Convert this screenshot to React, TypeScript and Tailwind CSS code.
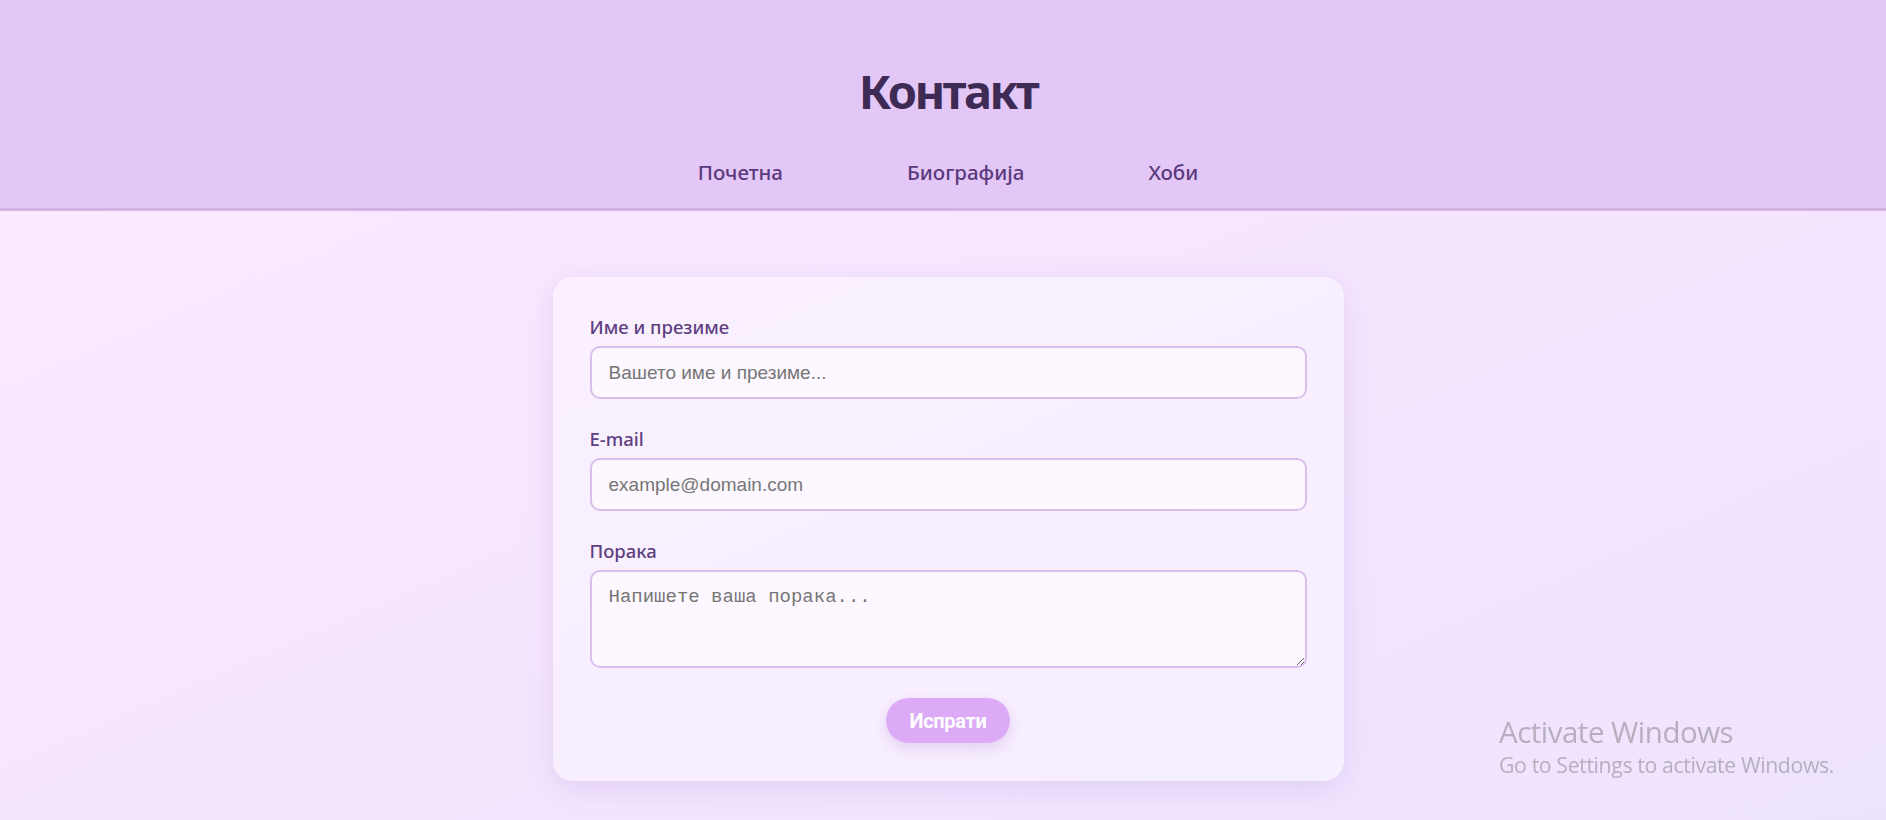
export default function App() {
  return (
    <div className="h-screen overflow-hidden pl-[10px] bg-gradient-to-br from-[#fce9ff] to-[#eee3fe] font-['Noto_Sans','Open_Sans',sans-serif]">
      {/* Header */}
      <header className="-ml-[10px] pl-[10px] h-[211px] bg-[#e3c7f7] border-b-[3px] border-[#d4b3e2] flex flex-col items-center">
        <h1 className="mt-[64px] text-[47px] leading-[54px] font-bold tracking-[-2.5px] text-[#3e2b55]">
          Контакт
        </h1>
        <nav className="mt-[41px] flex items-center gap-[124px] text-[20.5px] leading-[26px] font-medium text-[#5a3a7c]">
          <a href="#">Почетна</a>
          <a href="#">Биографија</a>
          <a href="#">Хоби</a>
        </nav>
      </header>

      {/* Form */}
      <main className="flex justify-center pt-[66px]">
        <form className="w-[791px] rounded-[20px] bg-white/40 px-[37px] pt-[38px] pb-[38px] shadow-[0_8px_28px_rgba(150,110,200,0.18)] flex flex-col">
          <label className="block text-[18.5px] leading-6 font-medium text-[#5e3f7f] mb-[7px]">
            Име и презиме
          </label>
          <input
            type="text"
            placeholder="Вашето име и презиме..."
            className="w-full h-[53px] rounded-[10px] border-2 border-[#d9bfea] bg-[#fdf8ff] pl-[17px] font-['Liberation_Sans',Arial,sans-serif] text-[19px] text-[#333] placeholder:text-[#767676] outline-none"
          />

          <label className="mt-[28px] block text-[18.5px] leading-6 font-medium text-[#5e3f7f] mb-[7px]">
            E-mail
          </label>
          <input
            type="email"
            placeholder="example@domain.com"
            className="w-full h-[53px] rounded-[10px] border-2 border-[#d9bfea] bg-[#fdf8ff] pl-[17px] font-['Liberation_Sans',Arial,sans-serif] text-[19px] text-[#333] placeholder:text-[#767676] outline-none"
          />

          <label className="mt-[28px] block text-[18.5px] leading-6 font-medium text-[#5e3f7f] mb-[7px]">
            Порака
          </label>
          <textarea
            placeholder="Напишете ваша порака..."
            className="w-full h-[98px] rounded-[10px] border-2 border-[#d9bfea] bg-[#fdf8ff] px-[17px] pt-[14px] font-['Liberation_Mono','Courier_New',monospace] text-[19px] leading-[22px] text-[#333] placeholder:text-[#767676] outline-none"
          />

          <div className="mt-[30px] flex justify-center">
            <button
              type="button"
              className="h-[45px] px-[24px] rounded-full bg-[#dcaaf6] font-['Roboto',sans-serif] text-[20px] font-bold tracking-[-0.3px] text-white shadow-[0_6px_14px_rgba(170,120,210,0.25)]"
            >
              Испрати
            </button>
          </div>
        </form>
      </main>

      {/* Windows watermark */}
      <div className="fixed left-[1499px] top-[714px] text-[#b7afbf] pointer-events-none font-['Open_Sans',sans-serif]">
        <p className="text-[29.5px] leading-[36px] tracking-[-0.5px]">Activate Windows</p>
        <p className="text-[21.3px] leading-[30px] tracking-[-0.4px]">Go to Settings to activate Windows.</p>
      </div>
    </div>
  );
}
